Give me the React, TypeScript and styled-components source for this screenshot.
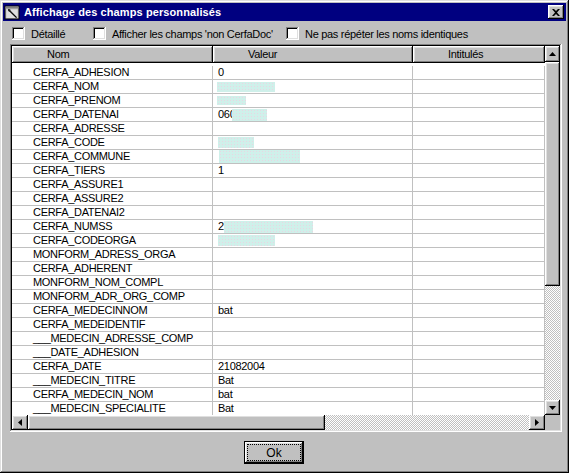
import React from "react";
import styled, { createGlobalStyle } from "styled-components";

const GlobalStyle = createGlobalStyle`
  html, body { margin: 0; padding: 0; background: #c0c0c0; }
  body { font-family: "Liberation Sans", Arial, sans-serif; font-size: 11px; color: #000; letter-spacing: -0.3px; }
  * { box-sizing: border-box; }
`;

const raised = `box-shadow: inset -1px -1px #000, inset 1px 1px #dfdfdf, inset -2px -2px #808080, inset 2px 2px #fff;`;
const button3d = `box-shadow: inset -1px -1px #000, inset 1px 1px #fff, inset -2px -2px #808080, inset 2px 2px #dfdfdf;`;
const sunken = `box-shadow: inset -1px -1px #fff, inset 1px 1px #808080, inset -2px -2px #dfdfdf, inset 2px 2px #000;`;
const dither = `
  background-color: #c0c0c0;
  background-image: conic-gradient(#c0c0c0 25%, #fff 0 50%, #c0c0c0 0 75%, #fff 0);
  background-size: 2px 2px;
`;

const Window = styled.div`
  width: 569px;
  height: 473px;
  padding: 3px;
  background: #c0c0c0;
  display: flex;
  flex-direction: column;
  ${raised}
`;

const TitleBar = styled.div`
  height: 18px;
  background: #000080;
  color: #fff;
  display: flex;
  align-items: center;
  padding: 0 2px 0 1px;
`;

const TitleText = styled.span`
  font-weight: bold;
  font-size: 11px;
  margin-left: 4px;
  flex: 1;
  letter-spacing: 0.1px;
`;

const CloseBtn = styled.div`
  width: 16px;
  height: 14px;
  background: #c0c0c0;
  display: flex;
  align-items: center;
  justify-content: center;
  padding-right: 1px;
  ${button3d}
`;

const Body = styled.div`
  flex: 1;
  display: flex;
  flex-direction: column;
  padding: 0 4px 0 7px;
`;

const CheckRow = styled.div`
  display: flex;
  height: 13px;
  margin-top: 6px;
  padding-left: 2px;
`;

const CheckItem = styled.label<{ $w: number }>`
  width: ${({ $w }) => $w}px;
  display: flex;
  align-items: center;
  gap: 6px;
  white-space: nowrap;
`;

const CheckBox = styled.span`
  width: 13px;
  height: 13px;
  background: #fff;
  flex: none;
  ${sunken}
`;

const Panel = styled.div`
  width: 552px;
  height: 388px;
  margin-top: 4px;
  padding: 2px;
  ${sunken}
`;

const PanelGrid = styled.div`
  display: grid;
  grid-template-columns: 533px 15px;
  grid-template-rows: 369px 15px;
`;

const Table = styled.div`
  background: #fff;
  overflow: hidden;
`;

const HeaderRow = styled.div`
  display: flex;
  height: 17px;
`;

const HeaderCell = styled.div<{ $w: number }>`
  width: ${({ $w }) => $w}px;
  background: #c0c0c0;
  line-height: 17px;
  padding-left: 35px;
  ${button3d}
`;

const Rows = styled.div`
  padding-top: 3px;
`;

const Row = styled.div`
  display: flex;
  height: 14px;
`;

const Cell = styled.div<{ $w: number; $pad: number }>`
  width: ${({ $w }) => $w}px;
  padding-left: ${({ $pad }) => $pad}px;
  border-right: 1px solid #c0c0c0;
  border-bottom: 1px solid #c0c0c0;
  display: flex;
  align-items: center;
  white-space: nowrap;
  overflow: hidden;
  line-height: 13px;
`;

const Masked = styled.span<{ $w: number; $h: number; $ml: number }>`
  display: inline-block;
  width: ${({ $w }) => $w}px;
  height: ${({ $h }) => $h}px;
  margin-left: ${({ $ml }) => $ml}px;
  background-color: #cff0ea;
  background-image: radial-gradient(circle, #e9d6e2 0.6px, transparent 0.8px);
  background-size: 3px 3px;
  flex: none;
`;

const VScroll = styled.div`
  display: flex;
  flex-direction: column;
`;

const HScroll = styled.div`
  display: flex;
`;

const Track = styled.div`
  flex: 1;
  ${dither}
`;

const Thumb = styled.div<{ $w?: number; $h?: number }>`
  flex: none;
  width: ${({ $w }) => ($w ? `${$w}px` : "auto")};
  height: ${({ $h }) => ($h ? `${$h}px` : "auto")};
  background: #c0c0c0;
  ${button3d}
`;

const ArrowBtn = styled.div<{ $w: number; $h: number }>`
  flex: none;
  width: ${({ $w }) => $w}px;
  height: ${({ $h }) => $h}px;
  background: #c0c0c0;
  display: flex;
  align-items: center;
  justify-content: center;
  ${button3d}
`;

const Corner = styled.div`
  background: #c0c0c0;
`;

const Footer = styled.div`
  display: flex;
  padding-left: 234px;
  margin-top: 9px;
`;

const OkButton = styled.button`
  width: 60px;
  height: 23px;
  padding: 0;
  border: 1px solid #000;
  background: #c0c0c0;
  font-family: "Liberation Sans", Arial, sans-serif;
  font-size: 12px;
  color: #000;
  display: flex;
  align-items: stretch;
  ${button3d}
`;

const FocusRing = styled.span`
  flex: 1;
  margin: 3px;
  outline: 1px dotted #000;
  display: flex;
  align-items: center;
  justify-content: center;
`;

const Arrow = ({ dir }: { dir: "up" | "down" | "left" | "right" }) => {
  const pts: Record<string, string> = {
    up: "3.5,0 7,4 0,4",
    down: "0,0 7,0 3.5,4",
    left: "4,0 4,7 0,3.5",
    right: "0,0 4,3.5 0,7",
  };
  const vertical = dir === "up" || dir === "down";
  return (
    <svg width={vertical ? 7 : 4} height={vertical ? 4 : 7} viewBox={vertical ? "0 0 7 4" : "0 0 4 7"}>
      <polygon points={pts[dir]} fill="#000" />
    </svg>
  );
};

const AppIcon = () => (
  <svg width="16" height="16" viewBox="0 0 16 16">
    <rect x="1" y="2" width="14" height="13" fill="#c0c0c0" stroke="#000" strokeWidth="1" />
    <rect x="1.5" y="2.5" width="13" height="2" fill="#808080" />
    <rect x="2.5" y="5.5" width="11" height="8.5" fill="#dfdfdf" />
    <path d="M4 5 L6 5 L7 7 L13 13 L12 14 L6 8 L4 7 Z" fill="#404040" />
    <path d="M4.5 6 L12.5 13.5" stroke="#000" strokeWidth="1" />
  </svg>
);

type Mask = { w: number; h: number; ml: number };
type Field = { name: string; value?: string; mask?: Mask };

const fields: Field[] = [
  { name: "CERFA_ADHESION", value: "0" },
  { name: "CERFA_NOM", mask: { w: 58, h: 10, ml: -1 } },
  { name: "CERFA_PRENOM", mask: { w: 29, h: 9, ml: -1 } },
  { name: "CERFA_DATENAI", value: "060", mask: { w: 35, h: 12, ml: -3 } },
  { name: "CERFA_ADRESSE" },
  { name: "CERFA_CODE", mask: { w: 36, h: 11, ml: 0 } },
  { name: "CERFA_COMMUNE", mask: { w: 81, h: 13, ml: 1 } },
  { name: "CERFA_TIERS", value: "1" },
  { name: "CERFA_ASSURE1" },
  { name: "CERFA_ASSURE2" },
  { name: "CERFA_DATENAI2" },
  { name: "CERFA_NUMSS", value: "2", mask: { w: 89, h: 12, ml: 0 } },
  { name: "CERFA_CODEORGA", mask: { w: 57, h: 11, ml: 0 } },
  { name: "MONFORM_ADRESS_ORGA" },
  { name: "CERFA_ADHERENT" },
  { name: "MONFORM_NOM_COMPL" },
  { name: "MONFORM_ADR_ORG_COMP" },
  { name: "CERFA_MEDECINNOM", value: "bat" },
  { name: "CERFA_MEDEIDENTIF" },
  { name: "___MEDECIN_ADRESSE_COMP" },
  { name: "___DATE_ADHESION" },
  { name: "CERFA_DATE", value: "21082004" },
  { name: "___MEDECIN_TITRE", value: "Bat" },
  { name: "CERFA_MEDECIN_NOM", value: "bat" },
  { name: "___MEDECIN_SPECIALITE", value: "Bat" },
];

const COLS = [201, 200, 132];

export default function App() {
  return (
    <>
      <GlobalStyle />
      <Window>
        <TitleBar>
          <AppIcon />
          <TitleText>Affichage des champs personnalisés</TitleText>
          <CloseBtn>
            <svg width="8" height="7" viewBox="0 0 8 7">
              <path d="M0 0 L2 0 L4 2 L6 0 L8 0 L5 3.5 L8 7 L6 7 L4 5 L2 7 L0 7 L3 3.5 Z" fill="#000" />
            </svg>
          </CloseBtn>
        </TitleBar>
        <Body>
          <CheckRow>
            <CheckItem $w={81}>
              <CheckBox />
              Détaillé
            </CheckItem>
            <CheckItem $w={193}>
              <CheckBox />
              Afficher les champs 'non CerfaDoc'
            </CheckItem>
            <CheckItem $w={250}>
              <CheckBox />
              Ne pas répéter les noms identiques
            </CheckItem>
          </CheckRow>
          <Panel>
            <PanelGrid>
              <Table>
                <HeaderRow>
                  <HeaderCell $w={COLS[0]}>Nom</HeaderCell>
                  <HeaderCell $w={COLS[1]}>Valeur</HeaderCell>
                  <HeaderCell $w={COLS[2]}>Intitulés</HeaderCell>
                </HeaderRow>
                <Rows>
                  {fields.map((f) => (
                    <Row key={f.name}>
                      <Cell $w={COLS[0]} $pad={21}>{f.name}</Cell>
                      <Cell $w={COLS[1]} $pad={5}>
                        {f.value}
                        {f.mask && <Masked $w={f.mask.w} $h={f.mask.h} $ml={f.mask.ml} />}
                      </Cell>
                      <Cell $w={COLS[2]} $pad={0} />
                    </Row>
                  ))}
                </Rows>
              </Table>
              <VScroll>
                <ArrowBtn $w={15} $h={16}>
                  <Arrow dir="up" />
                </ArrowBtn>
                <Thumb $h={224} />
                <Track />
                <ArrowBtn $w={15} $h={15}>
                  <Arrow dir="down" />
                </ArrowBtn>
              </VScroll>
              <HScroll>
                <ArrowBtn $w={16} $h={15}>
                  <Arrow dir="left" />
                </ArrowBtn>
                <Thumb $w={297} />
                <Track />
                <ArrowBtn $w={16} $h={15}>
                  <Arrow dir="right" />
                </ArrowBtn>
              </HScroll>
              <Corner />
            </PanelGrid>
          </Panel>
          <Footer>
            <OkButton>
              <FocusRing>Ok</FocusRing>
            </OkButton>
          </Footer>
        </Body>
      </Window>
    </>
  );
}
